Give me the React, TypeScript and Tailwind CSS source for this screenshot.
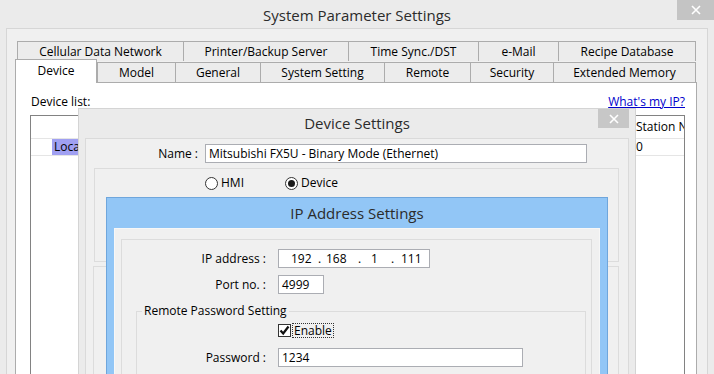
import React from 'react';

const topTabs: [string, number][] = [
  ['Cellular Data Network', 166],
  ['Printer/Backup Server', 165],
  ['Time Sync./DST', 130],
  ['e-Mail', 80],
  ['Recipe Database', 138],
];

const bottomTabs: [string, number][] = [
  ['Model', 78],
  ['General', 85],
  ['System Setting', 124],
  ['Remote', 86],
  ['Security', 83],
  ['Extended Memory', 143],
];

function Tab({ label, width, last }: { label: string; width: number; last?: boolean }) {
  return (
    <div
      style={{ width }}
      className={`h-[20px] shrink-0 flex items-center justify-center border-t border-l border-[#acacac] bg-[#ececec] text-[12px] text-black ${last ? 'border-r' : ''}`}
    >
      {label}
    </div>
  );
}

function Radio({ checked }: { checked?: boolean }) {
  return (
    <span className="w-[13px] h-[13px] rounded-full border border-[#333] bg-white flex items-center justify-center">
      {checked && <span className="w-[7px] h-[7px] rounded-full bg-[#1a1a1a]" />}
    </span>
  );
}

function CloseButton() {
  return (
    <svg width="10" height="10" viewBox="0 0 10 10">
      <path d="M1 1 L9 9 M9 1 L1 9" stroke="white" strokeWidth="1.6" />
    </svg>
  );
}

function Field({ label, labelWidth, children }: { label: string; labelWidth: number; children: React.ReactNode }) {
  return (
    <div className="flex items-center">
      <div style={{ width: labelWidth }} className="text-right text-[12px] pr-[2px]">
        {label}
      </div>
      <div className="ml-[10px]">{children}</div>
    </div>
  );
}

export default function App() {
  return (
    <div className="relative w-[714px] h-[374px] overflow-hidden bg-[#ebebeb] text-black font-['Open_Sans',sans-serif]">
      {/* Main window title */}
      <div className="h-[28px] flex items-center justify-center text-[15px] text-[#2b2b2b] pt-[3px]">
        System Parameter Settings
      </div>
      <div className="absolute right-0 top-0 w-[37px] h-[20px] bg-[#c4c4c4] flex items-center justify-center">
        <CloseButton />
      </div>

      {/* Main body */}
      <div className="ml-[6px] w-[702px] h-[346px] border-t border-l border-r border-[#d6d6d6] bg-[#f0f0f0] pl-[8px] pt-[12px]">
        <div className="flex pl-[2px]">
          {topTabs.map(([l, w], i) => (
            <Tab key={l} label={l} width={w} last={i === topTabs.length - 1} />
          ))}
        </div>
        <div className="relative z-10 -mt-[2px] h-[23px] flex items-end">
          <div className="w-[82px] h-[24px] -mb-px flex items-start justify-center pt-[2px] bg-white border-t border-l border-r border-[#acacac] text-[12px]">
            Device
          </div>
          {bottomTabs.map(([l, w], i) => (
            <Tab key={l} label={l} width={w} last={i === bottomTabs.length - 1} />
          ))}
        </div>

        {/* Tab page */}
        <div className="w-[682px] h-[300px] bg-white border border-[#acacac] pl-[14px] pr-[11px] pt-[11px]">
          <div className="flex justify-between items-center h-[16px] text-[12px]">
            <span className="pl-[1px]">Device list:</span>
            <span className="text-[#0000cc] underline">What&apos;s my IP?</span>
          </div>
          <div className="mt-[5px] w-[655px] h-[260px] border border-[#828282] bg-white text-[12px] overflow-hidden whitespace-nowrap">
            <div className="h-[23px] flex items-center border-b border-[#e5e5e5]">
              <span className="w-[605px] shrink-0 pl-[60px]">Name</span>
              <span className="shrink-0">Station No.</span>
            </div>
            <div className="h-[17px] flex items-center border-b border-[#e5e5e5]">
              <span className="ml-[21px] w-[584px] shrink-0 h-[16px] bg-[#a0a0f2] pl-[2px] leading-[16px]">Local HMI</span>
              <span className="shrink-0">0</span>
            </div>
          </div>
        </div>
      </div>

      {/* Device Settings dialog */}
      <div className="absolute left-[78px] top-[108px] w-[558px] h-[280px] bg-[#ebebeb] border-l border-t border-r border-[#d4d4d4]">
        <div className="h-[29px] flex items-center justify-center text-[15px] text-[#2b2b2b]">
          Device Settings
        </div>
        <div className="absolute left-[519px] top-0 w-[31px] h-[19px] bg-[#c7c7c7] flex items-center justify-center">
          <CloseButton />
        </div>
        <div className="mx-[6px] h-[250px] bg-[#f0f0f0] border-t border-l border-r border-[#dadada] pt-[5px]">
          <div className="flex items-center">
            <div className="w-[112px] text-right text-[12px]">Name :</div>
            <div className="ml-[7px] w-[382px] h-[19px] bg-white border border-[#abadb3] flex items-center pl-[3px] text-[12px]">
              Mitsubishi FX5U - Binary Mode (Ethernet)
            </div>
          </div>
          <div className="mt-[5px] ml-[8px] w-[525px] h-[94px] border border-[#dcdcdc] pt-[7px]">
            <div className="flex items-center h-[14px] text-[12px]">
              <div className="ml-[110px] flex items-center gap-[3px]">
                <Radio />
                <span>HMI</span>
              </div>
              <div className="ml-[41px] flex items-center gap-[3px]">
                <Radio checked />
                <span>Device</span>
              </div>
            </div>
          </div>
          <div className="mt-[4px] ml-[7px] w-[526px] h-[120px] border border-[#dcdcdc]" />
        </div>
      </div>

      {/* IP Address Settings dialog */}
      <div className="absolute left-[106px] top-[197px] w-[502px] h-[200px] bg-[#92c6f6] border border-[#6fa6dc]">
        <div className="h-[30px] flex items-center justify-center text-[15px] text-[#2b2b2b]">
          IP Address Settings
        </div>
        <div className="mx-[7px] h-[170px] bg-[#f0f0f0] border-t border-l border-r border-[#f7f7f7] pt-[10px] pl-[6px] pr-[7px]">
          <div className="h-[160px] border border-[#dcdcdc] pt-[9px]">
            <Field label="IP address :" labelWidth={146}>
              <div className="w-[152px] h-[19px] bg-white border border-[#abadb3] flex items-center pl-[12px] text-[12px]">
                <span className="w-[27px]">192</span>
                <span className="w-[8px]">.</span>
                <span className="w-[32px]">168</span>
                <span className="w-[13px]">.</span>
                <span className="w-[20px]">1</span>
                <span className="w-[10px]">.</span>
                <span>111</span>
              </div>
            </Field>
            <div className="mt-[7px]">
              <Field label="Port no. :" labelWidth={146}>
                <div className="w-[46px] h-[19px] bg-white border border-[#abadb3] flex items-center pl-[3px] text-[12px]">
                  4999
                </div>
              </Field>
            </div>
            <div className="relative mt-[17px] ml-[14px] mr-[5px] h-[80px] border border-[#dcdcdc] pt-[11px]">
              <span className="absolute -top-[9px] left-[5px] px-[2px] bg-[#f0f0f0] text-[12px] leading-[16px]">
                Remote Password Setting
              </span>
              <div className="ml-[141px] flex items-center h-[15px]">
                <span className="w-[13px] h-[13px] border border-[#333] bg-white flex items-center justify-center">
                  <svg width="11" height="11" viewBox="0 0 11 11">
                    <path d="M1.5 5.5 L4.2 8.5 L9.5 1.5" fill="none" stroke="#111" strokeWidth="2.2" />
                  </svg>
                </span>
                <span className="ml-px px-[1px] border border-dotted border-[#333] text-[12px] leading-[13px]">
                  Enable
                </span>
              </div>
              <div className="mt-[10px]">
                <Field label="Password :" labelWidth={131}>
                  <div className="w-[245px] h-[19px] bg-white border border-[#abadb3] flex items-center pl-[3px] text-[12px]">
                    1234
                  </div>
                </Field>
              </div>
            </div>
          </div>
        </div>
      </div>
    </div>
  );
}
